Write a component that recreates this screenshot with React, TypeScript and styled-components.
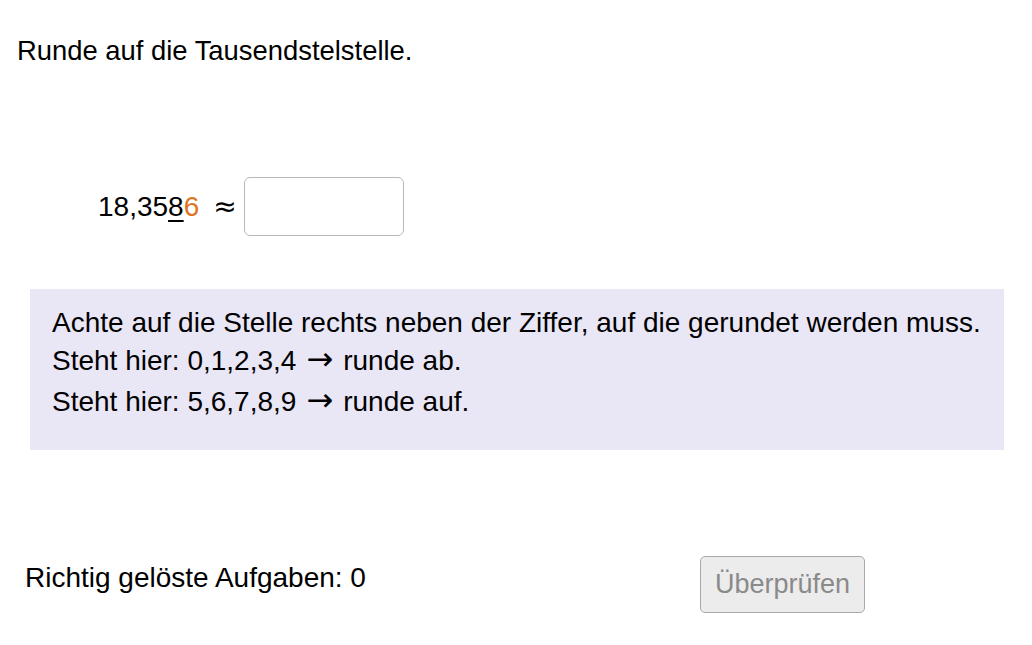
import React from "react";
import styled, { createGlobalStyle } from "styled-components";

const Global = createGlobalStyle`
  html, body { margin: 0; padding: 0; background: #ffffff; }
  body { font-family: "Liberation Sans", Arial, sans-serif; color: #000; }
`;

const Page = styled.div`
  width: 1032px;
  height: 645px;
  display: flex;
  flex-direction: column;
  box-sizing: border-box;
  padding: 34px 28px 0 17px;
  font-size: 28px;
`;

const Title = styled.div`
  font-size: 27.4px;
  line-height: 34px;
`;

const EquationRow = styled.div`
  display: flex;
  align-items: center;
  margin-top: 109px;
  padding-left: 81px;
`;

const Number = styled.span`
  margin-right: 14px;
`;

const Underlined = styled.span`
  text-decoration: underline;
  text-underline-offset: 4px;
  text-decoration-thickness: 1.5px;
`;

const Orange = styled.span`
  color: #e0751f;
`;

const Symbol = styled.span`
  font-family: "DejaVu Sans", sans-serif;
  font-size: 28px;
  margin-right: 7px;
`;

const Arrow = styled.span`
  font-family: "DejaVu Sans", sans-serif;
  font-size: 32px;
  margin: 0 10px;
  line-height: 1;
`;

const AnswerInput = styled.input`
  width: 160px;
  height: 59px;
  box-sizing: border-box;
  border: 1.5px solid #b8b8bc;
  border-radius: 6px;
  background: #fff;
  outline: none;
  font-size: 24px;
`;

const HintBox = styled.div`
  margin-top: 53px;
  margin-left: 13px;
  width: 974px;
  height: 161px;
  box-sizing: border-box;
  background: #e9e6f6;
  padding: 15px 22px;
  display: flex;
  flex-direction: column;
`;

const HintLine = styled.div<{ $gap?: number }>`
  line-height: 38px;
  margin-top: ${(p) => p.$gap ?? 0}px;
`;

const Footer = styled.div`
  margin-top: 106px;
  display: flex;
  align-items: flex-start;
  padding-left: 8px;
`;

const Score = styled.div`
  width: 675px;
  line-height: 32px;
  padding-top: 6px;
`;

const CheckButton = styled.button`
  width: 165px;
  height: 57px;
  box-sizing: border-box;
  border: 1.5px solid #a9a9ab;
  border-radius: 5px;
  background: #ececec;
  color: #8a8a8a;
  font-family: inherit;
  font-size: 27px;
`;

export default function App() {
  return (
    <>
      <Global />
      <Page>
        <Title>Runde auf die Tausendstelstelle.</Title>
        <EquationRow>
          <Number>
            18,35<Underlined>8</Underlined>
            <Orange>6</Orange>
          </Number>
          <Symbol>≈</Symbol>
          <AnswerInput type="text" />
        </EquationRow>
        <HintBox>
          <HintLine>Achte auf die Stelle rechts neben der Ziffer, auf die gerundet werden muss.</HintLine>
          <HintLine>
            Steht hier: 0,1,2,3,4<Arrow>→</Arrow>runde ab.
          </HintLine>
          <HintLine $gap={3}>
            Steht hier: 5,6,7,8,9<Arrow>→</Arrow>runde auf.
          </HintLine>
        </HintBox>
        <Footer>
          <Score>Richtig gelöste Aufgaben: 0</Score>
          <CheckButton disabled>Überprüfen</CheckButton>
        </Footer>
      </Page>
    </>
  );
}
